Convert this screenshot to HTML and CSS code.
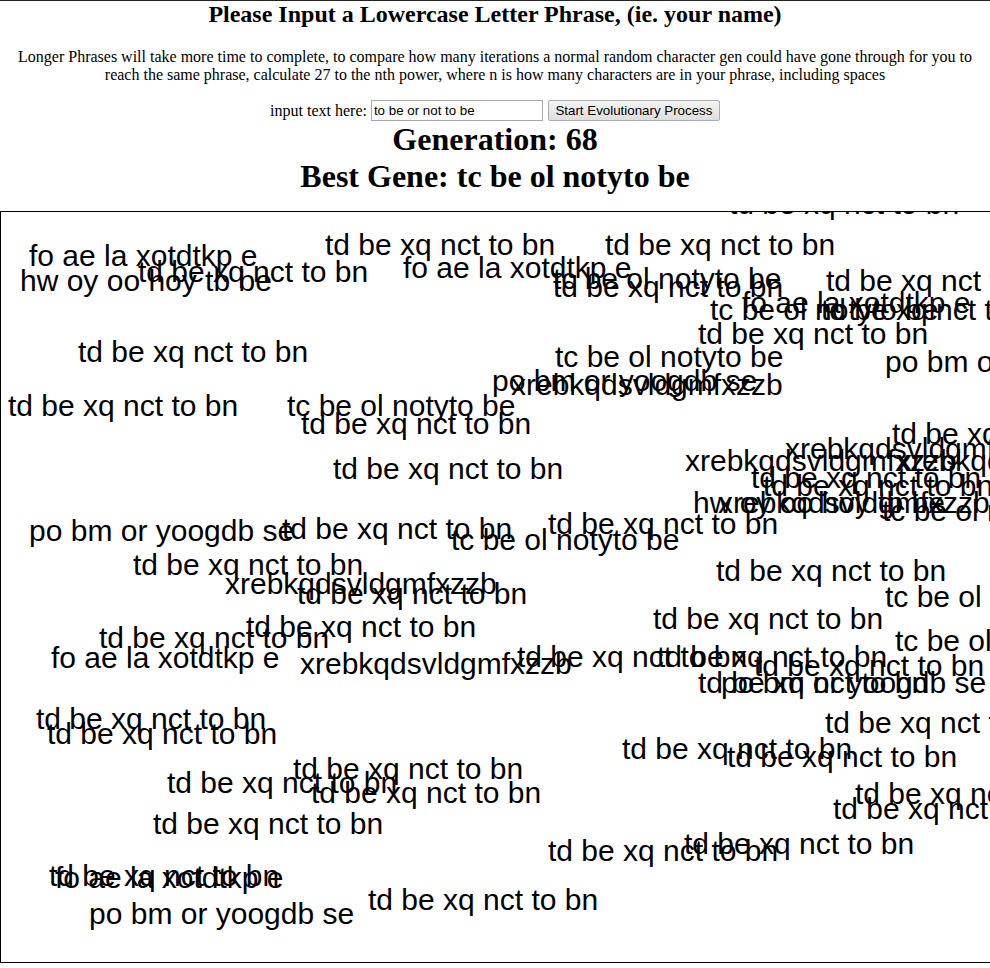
FILE: index.html
```html
<!DOCTYPE html>
<html>
<head>
<meta charset="utf-8">
<title>Evolution</title>
<link rel="stylesheet" href="styles.css">
</head>
<body>
<div class="topline"></div>
<h2 class="title">Please Input a Lowercase Letter Phrase, (ie. your name)</h2>
<p class="note">Longer Phrases will take more time to complete, to compare how many iterations a normal random character gen could have gone through for you to reach the same phrase, calculate 27 to the nth power, where n is how many characters are in your phrase, including spaces</p>
<div class="controls">
  <span class="label">input text here:</span>
  <input class="phrase" type="text" value="to be or not to be">
  <button class="start" type="button">Start Evolutionary Process</button>
</div>
<h1 class="stat">Generation: 68</h1>
<h1 class="stat">Best Gene: tc be ol notyto be</h1>
<div class="board">
<span style="left:728px;top:-24px">td be xq nct to bn</span>
<span style="left:28px;top:28px">fo ae la xotdtkp e</span>
<span style="left:19px;top:53px">hw oy oo hoy tb be</span>
<span style="left:137px;top:44px">td be xq nct to bn</span>
<span style="left:324px;top:17px">td be xq nct to bn</span>
<span style="left:604px;top:17px">td be xq nct to bn</span>
<span style="left:402px;top:40px">fo ae la xotdtkp e</span>
<span style="left:552px;top:51px">tc be ol notyto be</span>
<span style="left:552px;top:59px">td be xq nct to bn</span>
<span style="left:825px;top:53px">td be xq nct to bn</span>
<span style="left:741px;top:75px">fo ae la xotdtkp e</span>
<span style="left:709px;top:82px">tc be ol notyto be</span>
<span style="left:820px;top:82px">td be xq nct to bn</span>
<span style="left:697px;top:106px">td be xq nct to bn</span>
<span style="left:77px;top:124px">td be xq nct to bn</span>
<span style="left:554px;top:129px">tc be ol notyto be</span>
<span style="left:884px;top:134px">po bm or yoogdb se</span>
<span style="left:491px;top:153px">po bm or yoogdb se</span>
<span style="left:510px;top:157px">xrebkqdsvldgmfxzzb</span>
<span style="left:7px;top:178px">td be xq nct to bn</span>
<span style="left:286px;top:178px">tc be ol notyto be</span>
<span style="left:300px;top:196px">td be xq nct to bn</span>
<span style="left:891px;top:206px">td be xq nct to bn</span>
<span style="left:784px;top:221px">xrebkqdsvldgmfxzzb</span>
<span style="left:332px;top:241px">td be xq nct to bn</span>
<span style="left:684px;top:233px">xrebkqdsvldgmfxzzb</span>
<span style="left:896px;top:233px">xrebkqdsvldgmfxzzb</span>
<span style="left:750px;top:250px">td be xq nct to bn</span>
<span style="left:762px;top:258px">td be xq nct to bn</span>
<span style="left:692px;top:275px">hw oy oo hoy tb be</span>
<span style="left:717px;top:275px">xrebkqdsvldgmfxzzb</span>
<span style="left:881px;top:283px">tc be ol notyto be</span>
<span style="left:28px;top:303px">po bm or yoogdb se</span>
<span style="left:281px;top:301px">td be xq nct to bn</span>
<span style="left:547px;top:296px">td be xq nct to bn</span>
<span style="left:450px;top:312px">tc be ol notyto be</span>
<span style="left:132px;top:337px">td be xq nct to bn</span>
<span style="left:224px;top:356px">xrebkqdsvldgmfxzzb</span>
<span style="left:296px;top:366px">td be xq nct to bn</span>
<span style="left:715px;top:343px">td be xq nct to bn</span>
<span style="left:884px;top:369px">tc be ol notyto be</span>
<span style="left:652px;top:391px">td be xq nct to bn</span>
<span style="left:245px;top:399px">td be xq nct to bn</span>
<span style="left:98px;top:410px">td be xq nct to bn</span>
<span style="left:894px;top:413px">tc be ol notyto be</span>
<span style="left:50px;top:430px">fo ae la xotdtkp e</span>
<span style="left:299px;top:436px">xrebkqdsvldgmfxzzb</span>
<span style="left:516px;top:429px">td be xq nct to bn</span>
<span style="left:656px;top:429px">td be xq nct to bn</span>
<span style="left:753px;top:438px">td be xq nct to bn</span>
<span style="left:697px;top:455px">td be xq nct to bn</span>
<span style="left:720px;top:455px">po bm or yoogdb se</span>
<span style="left:35px;top:491px">td be xq nct to bn</span>
<span style="left:46px;top:506px">td be xq nct to bn</span>
<span style="left:824px;top:495px">td be xq nct to bn</span>
<span style="left:621px;top:521px">td be xq nct to bn</span>
<span style="left:726px;top:529px">td be xq nct to bn</span>
<span style="left:292px;top:541px">td be xq nct to bn</span>
<span style="left:166px;top:555px">td be xq nct to bn</span>
<span style="left:310px;top:565px">td be xq nct to bn</span>
<span style="left:854px;top:566px">td be xq nct to bn</span>
<span style="left:832px;top:581px">td be xq nct to bn</span>
<span style="left:152px;top:596px">td be xq nct to bn</span>
<span style="left:547px;top:623px">td be xq nct to bn</span>
<span style="left:683px;top:616px">td be xq nct to bn</span>
<span style="left:48px;top:648px">td be xq nct to bn</span>
<span style="left:54px;top:650px">fo ae la xotdtkp e</span>
<span style="left:88px;top:686px">po bm or yoogdb se</span>
<span style="left:367px;top:672px">td be xq nct to bn</span>
</div>
</body>
</html>
```
FILE: styles.css
```css
html, body {
  margin: 0;
  padding: 0;
  overflow: hidden;
  background: #fff;
}

body {
  font-family: "Liberation Serif", "Times New Roman", serif;
  font-size: 16px;
  color: #000;
  text-align: center;
}

.topline {
  border-top: 1px solid #222;
}

.title {
  font-size: 24px;
  font-weight: bold;
  margin: 0 0 19.92px;
}

.note {
  margin: 0 0 16px;
}

.controls {
  display: flex;
  justify-content: center;
  align-items: center;
  gap: 4px;
  height: 21px;
}

.label {
  position: relative;
  top: 1px;
}

.phrase {
  box-sizing: border-box;
  width: 172px;
  height: 21px;
  margin: 0;
  padding: 1px 2px;
  border: 1px solid #a9a9a9;
  border-radius: 0;
  font-family: "Liberation Sans", Arial, sans-serif;
  font-size: 13.333px;
  color: #000;
  background: #fff;
}

.start {
  box-sizing: border-box;
  width: 172px;
  height: 21px;
  margin: 0 0 0 1px;
  padding: 0;
  border: 1px solid #adadad;
  border-radius: 2px;
  background: linear-gradient(#f4f4f4, #dedede);
  font-family: "Liberation Sans", Arial, sans-serif;
  font-size: 13.333px;
  line-height: 19px;
  white-space: nowrap;
  color: #000;
}

.stat {
  font-size: 32px;
  font-weight: bold;
  margin: 0;
}

.board {
  position: relative;
  margin-top: 16px;
  width: 1200px;
  height: 750px;
  border: 1px solid #000;
  overflow: hidden;
  text-align: left;
}

.board span {
  position: absolute;
  margin-top: 1px;
  font-family: "Liberation Sans", Arial, sans-serif;
  font-size: 30px;
  line-height: 30px;
  white-space: nowrap;
  color: #000;
}
```
